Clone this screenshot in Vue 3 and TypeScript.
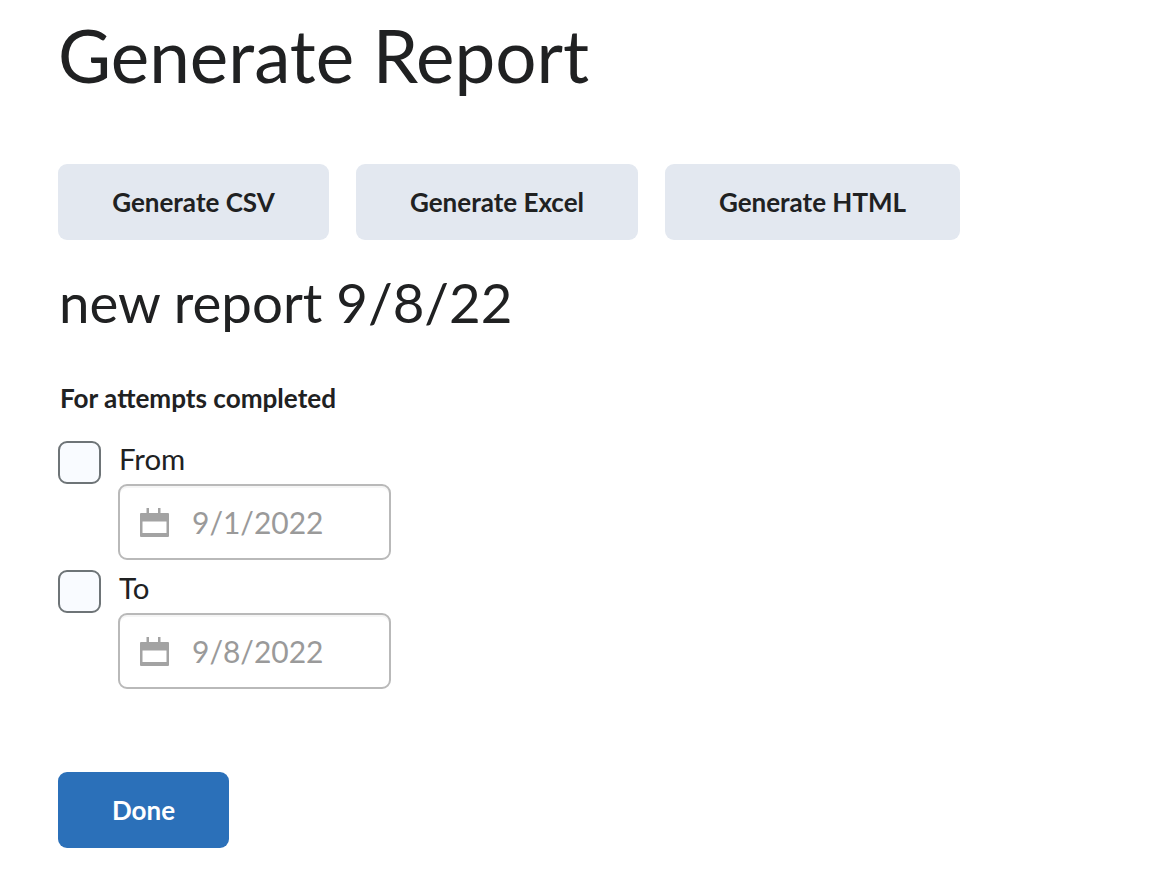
<template>
  <div class="page">
    <h1 class="title">Generate Report</h1>
    <div class="actions">
      <button v-for="b in buttons" :key="b.label" class="btn" :style="{ width: b.width + 'px' }">{{ b.label }}</button>
    </div>
    <h2 class="name">new report 9/8/22</h2>
    <div class="group-label">For attempts completed</div>
    <div v-for="d in dates" :key="d.label" class="date-row">
      <div class="check-line">
        <span class="check"></span>
        <span class="check-label">{{ d.label }}</span>
      </div>
      <div class="date-input">
        <svg class="cal" width="29" height="29" viewBox="0 0 29 29">
          <path
            fill="#a3a3a3"
            fill-rule="evenodd"
            d="M6.5 0H9v5h9V0h2.5v5H28a1 1 0 0 1 1 1v22a1 1 0 0 1-1 1H1a1 1 0 0 1-1-1V6a1 1 0 0 1 1-1h5.5V0zM2.5 13.5v11.5h24V13.5h-24z"
          />
        </svg>
        <span class="date-value">{{ d.value }}</span>
      </div>
    </div>
    <button class="btn primary">Done</button>
  </div>
</template>

<script setup lang="ts">
const buttons = [
  { label: 'Generate CSV', width: 271 },
  { label: 'Generate Excel', width: 282 },
  { label: 'Generate HTML', width: 295 }
]

const dates = [
  { label: 'From', value: '9/1/2022' },
  { label: 'To', value: '9/8/2022' }
]
</script>

<style>
body {
  background: #fff;
}
</style>

<style scoped>
.page {
  padding: 0 0 36px 58px;
  font-family: Lato, "Liberation Sans", sans-serif;
  color: #202122;
}

.title {
  margin: 0;
  padding-top: 15px;
  font-size: 72.8px;
  line-height: 80px;
  font-weight: 400;
  letter-spacing: 0;
}

.actions {
  display: flex;
  gap: 27px;
  margin-top: 69px;
}

.btn {
  height: 76px;
  border: 0;
  border-radius: 9px;
  background: #e3e8f0;
  font-family: inherit;
  font-size: 26px;
  font-weight: 700;
  color: #202122;
  padding: 0;
}

.name {
  margin: 28px 0 0 1px;
  font-size: 54.6px;
  line-height: 68px;
  font-weight: 400;
}

.group-label {
  margin: 46px 0 0 2px;
  font-size: 26.1px;
  line-height: 32px;
  font-weight: 700;
}

.date-row {
  margin-top: 10px;
}

.group-label + .date-row {
  margin-top: 27px;
}

.check-line {
  display: flex;
  align-items: flex-start;
  gap: 18px;
  height: 43px;
}

.check {
  width: 43px;
  height: 43px;
  box-sizing: border-box;
  border: 2px solid #6e7477;
  border-radius: 9px;
  background: #f9fbff;
}

.check-label {
  font-size: 29.4px;
  line-height: 36px;
}

.date-input {
  display: flex;
  align-items: center;
  gap: 23px;
  box-sizing: border-box;
  width: 273px;
  height: 76px;
  margin-left: 60px;
  padding-left: 20px;
  border: 2px solid #b9b9b9;
  border-radius: 9px;
  background: #fff;
  box-shadow: inset 0 2px 0 #f5f5f5;
}

.date-value {
  font-size: 30px;
  color: #9a9a9a;
}

.primary {
  display: block;
  width: 171px;
  margin-top: 83px;
  background: #2b70b9;
  color: #fff;
}
</style>
